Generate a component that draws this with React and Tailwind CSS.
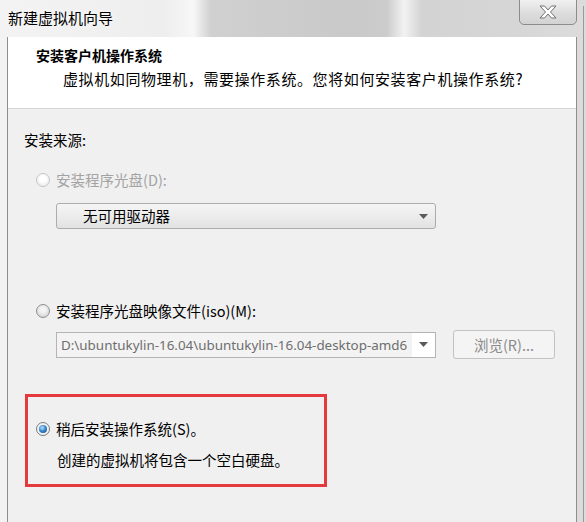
import React from 'react'

const cjk = "font-['Noto_Sans_CJK_SC','Noto_Sans',sans-serif]"

function Radio({ state }) {
  // state: 'disabled' | 'off' | 'on'
  if (state === 'disabled') {
    return (
      <span className="w-[14px] h-[14px] rounded-full border border-[#c6c6c6] bg-[radial-gradient(circle_at_50%_40%,#ffffff_30%,#e2e2e2_100%)] shrink-0" />
    )
  }
  if (state === 'off') {
    return (
      <span className="w-[14px] h-[14px] rounded-full border border-[#8f8f8f] bg-[radial-gradient(circle_at_50%_40%,#f4f4f4_25%,#c9c9c9_100%)] shrink-0" />
    )
  }
  return (
    <span className="w-[14px] h-[14px] rounded-full border border-[#7a7a7a] bg-[#f2f2f2] flex items-center justify-center shrink-0">
      <span className="w-[8px] h-[8px] rounded-full bg-[radial-gradient(circle_at_40%_35%,#bfe6ff_0%,#3a8ad2_45%,#0d3f7a_100%)]" />
    </span>
  )
}

function Arrow() {
  return (
    <svg width="9" height="5" viewBox="0 0 9 5" className="shrink-0">
      <path d="M0 0 H9 L4.5 5 Z" fill="#5a5a5a" />
    </svg>
  )
}

export default function App() {
  return (
    <div
      className={`w-[586px] h-[522px] overflow-hidden relative ${cjk} bg-[linear-gradient(90deg,#f3f3f3_0%,#eeeeee_28%,#f7f7f7_33%,#d0d0d0_36%,#c9c9c9_60%,#cccccc_66%,#f2f2f2_69%,#d3d3d3_72%,#d6d6d6_88%,#dcdcdc_100%)]`}
    >
      {/* Title bar */}
      <div className="h-[37px] flex items-start">
        <div className="pl-[8px] pt-[7px] text-[15px] leading-[22px] text-black [text-shadow:0_0_6px_#ffffff]">
          新建虚拟机向导
        </div>
        <div className="ml-auto mr-[9px] mt-[-1px] w-[58px] h-[26px] rounded-b-[5px] border border-[#8c8c8c] bg-[linear-gradient(180deg,#f0f0f0_0%,#dedede_50%,#d2d2d2_100%)] flex items-center justify-center">
          <svg width="20" height="14" viewBox="0 0 20 14">
            <path
              d="M2 1 H6.5 L10 5 L13.5 1 H18 L12.5 7 L18 13 H13.5 L10 9 L6.5 13 H2 L7.5 7 Z"
              fill="#ffffff"
              stroke="#707070"
              strokeWidth="1"
              strokeLinejoin="round"
            />
          </svg>
        </div>
      </div>

      {/* Window body */}
      <div className="ml-[7px] mr-[9px] h-[485px] border-l border-r border-[#8e8e8e] bg-[#f0f0f0] flex flex-col">
        {/* Header */}
        <div className="h-[72px] bg-white border-b border-[#d5d5d5] shrink-0">
          <div className="pl-[28px] pt-[8px] text-[14px] leading-[20px] font-bold text-black">
            安装客户机操作系统
          </div>
          <div className="pl-[55px] mt-[4px] text-[15px] leading-[20px] tracking-[0.6px] text-black">
            虚拟机如同物理机，需要操作系统。您将如何安装客户机操作系统?
          </div>
        </div>

        {/* Body */}
        <div className="flex flex-col">
          <div className="pl-[16px] pt-[21px] text-[14.5px] leading-[20px] text-black">安装来源:</div>

          <div className="pl-[28px] mt-[20px] flex items-center gap-[6px] h-[20px]">
            <Radio state="disabled" />
            <span className="text-[14.5px] leading-[20px] text-[#a3a3a3]">安装程序光盘(D):</span>
          </div>

          <div className="ml-[48px] mt-[13px] w-[380px] h-[26px] rounded-[3px] border border-[#acacac] bg-[linear-gradient(180deg,#f5f5f5_0%,#ececec_50%,#e2e2e2_100%)] flex items-center pl-[26px] pr-[7px]">
            <span className="text-[14.5px] leading-[20px] text-black">无可用驱动器</span>
            <span className="ml-auto"><Arrow /></span>
          </div>

          <div className="pl-[28px] mt-[72px] flex items-center gap-[6px] h-[20px]">
            <Radio state="off" />
            <span className="text-[14.5px] leading-[20px] text-black">安装程序光盘映像文件(iso)(M):</span>
          </div>

          <div className="ml-[48px] mt-[9px] flex items-center">
            <div className="w-[380px] h-[26px] border border-[#b4b4b4] bg-[#f3f3f3] flex items-stretch">
              <div className="flex-1 overflow-hidden whitespace-nowrap pl-[4px] font-['Noto_Sans',sans-serif] text-[13.4px] leading-[24px] text-[#6e6e6e]">
                D:\ubuntukylin-16.04\ubuntukylin-16.04-desktop-amd6
              </div>
              <div className="w-[23px] bg-white flex items-center justify-center">
                <Arrow />
              </div>
            </div>
            <div className="ml-[17px] w-[102px] h-[29px] rounded-[3px] border border-[#c2c2c2] bg-[#f4f4f4] flex items-center justify-center text-[14.5px] text-[#8a8a8a]">
              浏览(R)...
            </div>
          </div>

          {/* Highlighted option */}
          <div className="ml-[17px] mt-[35px] w-[302px] h-[93px] border-[3px] border-[#e5393e] flex flex-col">
            <div className="pl-[8px] mt-[22px] flex items-center gap-[6px] h-[20px]">
              <Radio state="on" />
              <span className="text-[14.5px] leading-[20px] text-black">稍后安装操作系统(S)。</span>
            </div>
            <div className="pl-[29px] mt-[11px] text-[14.5px] leading-[20px] text-black">
              创建的虚拟机将包含一个空白硬盘。
            </div>
          </div>
        </div>
      </div>

      {/* right frame outline */}
      <div className="absolute right-[2px] top-[6px] bottom-0 w-px bg-[#9a9a9a]" />
    </div>
  )
}
